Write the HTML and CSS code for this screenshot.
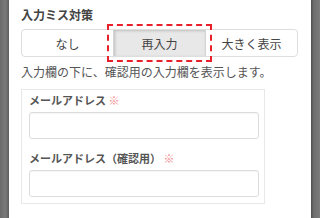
FILE: index.html
```html
<!DOCTYPE html>
<html lang="ja">
<head>
<meta charset="utf-8">
<link rel="stylesheet" href="styles.css">
</head>
<body>
<div class="side side-left"></div>
<main class="panel">
  <div class="title">入力ミス対策</div>
  <div class="seg">
    <div class="seg-btn">なし</div>
    <div class="seg-btn active">再入力</div>
    <div class="seg-btn">大きく表示</div>
  </div>
  <p class="desc">入力欄の下に、確認用の入力欄を表示します。</p>
  <div class="preview">
    <div class="field">
      <div class="label">メールアドレス <span class="req">※</span></div>
      <div class="input"></div>
    </div>
    <div class="field field-2">
      <div class="label">メールアドレス（確認用） <span class="req">※</span></div>
      <div class="input"></div>
    </div>
  </div>
</main>
<div class="side side-right"></div>
</body>
</html>
```
FILE: styles.css
```css
html, body {
  margin: 0;
  padding: 0;
  height: 218px;
  overflow: hidden;
}
body {
  display: flex;
  font-family: "Noto Sans CJK JP", "Noto Sans", sans-serif;
  color: #444;
}
.side {
  width: 9px;
  flex: none;
  height: 218px;
}
.side-left {
  background: linear-gradient(to right, #6a6a6a, #7a7a7a 60%, #5e5e5e);
}
.side-right {
  background: linear-gradient(to right, #4e4e4e, #6e6e6e 30%, #7c7c7c);
}
.panel {
  width: 302px;
  flex: none;
  background: #fff;
  padding: 6px 0 0 12px;
  box-sizing: border-box;
}
.title {
  font-size: 12px;
  font-weight: bold;
  line-height: 18px;
  color: #444;
}
.seg {
  display: flex;
  width: 277px;
  height: 28px;
  margin-top: 5px;
  border: 1px solid #dedede;
  border-radius: 4px;
  box-sizing: border-box;
  background: #fff;
}
.seg-btn {
  flex: 1;
  display: flex;
  align-items: center;
  justify-content: center;
  font-size: 12px;
  color: #444;
}
.seg-btn.active {
  background: #e8e8e8;
  box-shadow: inset 1px 1px 3px rgba(0,0,0,0.18);
  border-left: 1px solid #d4d4d4;
  border-right: 1px solid #d4d4d4;
  outline: 2px dashed #e8202a;
  outline-offset: 4px;
}
.desc {
  margin: 6px 0 0;
  font-size: 12px;
  line-height: 18px;
  color: #555;
}
.preview {
  width: 244px;
  margin-top: 8px;
  border: 1px solid #e8e8e4;
  box-sizing: border-box;
  padding: 2px 5px 6px 7px;
}
.field-2 {
  margin-top: 11px;
}
.label {
  font-size: 11px;
  font-weight: bold;
  line-height: 16px;
  color: #555;
  margin-bottom: 4px;
}
.req {
  color: #f28a8a;
  font-weight: normal;
}
.input {
  height: 27px;
  border: 1px solid #dcdcdc;
  border-radius: 3px;
  box-sizing: border-box;
  background: #fff;
  box-shadow: inset 0 1px 1px rgba(0,0,0,0.04);
}
```
